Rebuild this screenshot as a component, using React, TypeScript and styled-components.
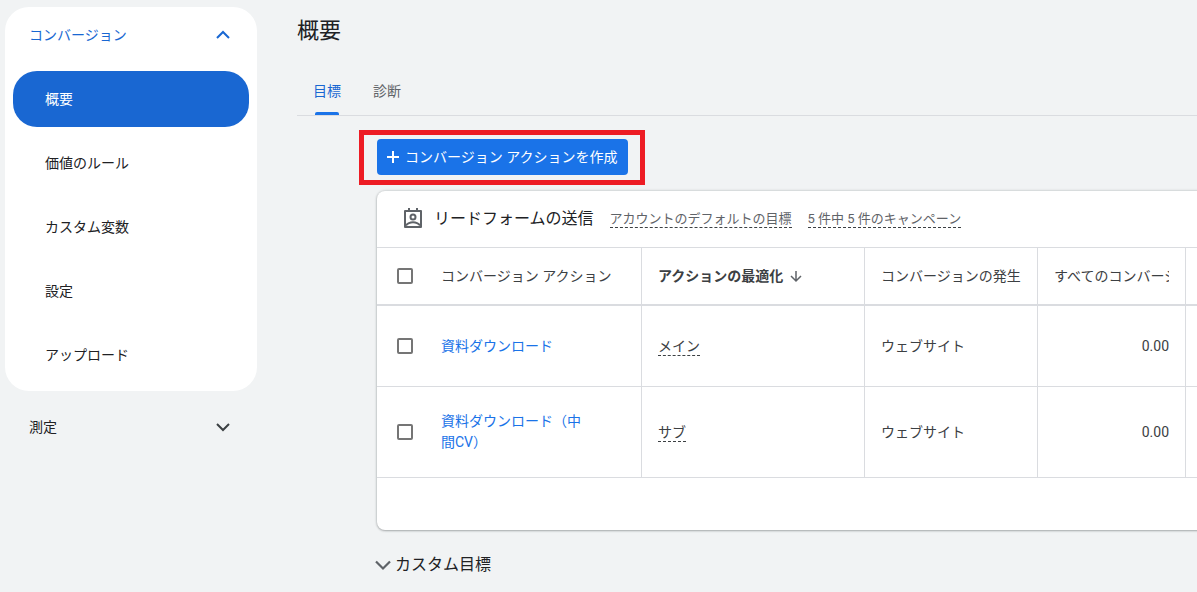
import React from "react";
import styled, { createGlobalStyle } from "styled-components";

const GlobalStyle = createGlobalStyle`
  *, *::before, *::after { box-sizing: border-box; }
  body {
    margin: 0;
    background: #f1f3f4;
    color: #202124;
    font-family: Roboto, "Noto Sans CJK JP", sans-serif;
    font-size: 14px;
    line-height: 20px;
    overflow-x: hidden;
  }
  button, input { font: inherit; margin: 0; }
`;

const Page = styled.div`
  display: flex;
  align-items: flex-start;
  min-height: 100vh;
`;

const Sidebar = styled.nav`
  flex: 0 0 252px;
  margin: 7px 40px 0 5px;
`;

const NavGroup = styled.div`
  display: flex;
  flex-direction: column;
  gap: 8px;
  margin-bottom: 8px;
  padding: 0 8px 8px;
  border-radius: 24px;
  background: #fff;
`;

const NavHeader = styled.button<{ $active?: boolean }>`
  display: flex;
  align-items: center;
  justify-content: space-between;
  width: 100%;
  height: 56px;
  padding: 0 24px;
  border: 0;
  background: none;
  color: ${(p) => (p.$active ? "#1967d2" : "#202124")};
  cursor: pointer;

  ${NavGroup} & { padding: 0 16px; }
`;

const NavItem = styled.a<{ $active?: boolean }>`
  display: flex;
  align-items: center;
  height: 56px;
  padding: 0 32px;
  border-radius: 24px;
  background: ${(p) => (p.$active ? "#1967d2" : "transparent")};
  color: ${(p) => (p.$active ? "#fff" : "#202124")};
  text-decoration: none;
`;

const Main = styled.main`
  flex: 1;
  min-width: 0;
`;

const Title = styled.h1`
  margin: 16px 0 0;
  font-size: 22px;
  line-height: 30px;
  font-weight: 400;
`;

const Tabs = styled.div`
  display: flex;
  margin-top: 22px;
  border-bottom: 1px solid #dadce0;
`;

const Tab = styled.button<{ $active?: boolean }>`
  display: flex;
  flex-direction: column;
  align-items: center;
  height: 47px;
  padding: 13px 16px 0;
  border: 0;
  background: none;
  color: ${(p) => (p.$active ? "#1967d2" : "#5f6368")};
  cursor: pointer;

  &::after {
    content: "";
    width: 24px;
    height: 3px;
    margin-top: auto;
    border-radius: 2px 2px 0 0;
    background: ${(p) => (p.$active ? "#1a73e8" : "transparent")};
  }
`;

const Content = styled.div`
  padding-left: 80px;
`;

const Highlight = styled.div`
  width: fit-content;
  margin: 14px 0 6px -18px;
  padding: 4px 12px 5px 13px;
  border: 5px solid #ed1c24;
`;

const CreateButton = styled.button`
  display: flex;
  align-items: center;
  gap: 4px;
  height: 36px;
  padding: 0 10px 0 8px;
  border: 0;
  border-radius: 4px;
  background: #1a73e8;
  color: #fff;
  white-space: nowrap;
  cursor: pointer;
`;

const Card = styled.section`
  min-width: 828px;
  padding-bottom: 52px;
  border-radius: 8px 0 0 8px;
  background: #fff;
  box-shadow: 0 1px 2px rgba(60, 64, 67, 0.3), 0 0 2px 1px rgba(60, 64, 67, 0.15);
`;

const CardHeader = styled.header`
  display: flex;
  align-items: center;
  gap: 16px;
  height: 57px;
  padding: 0 24px;
  border-bottom: 1px solid #dadce0;
`;

const GoalTitle = styled.h2`
  display: flex;
  align-items: center;
  gap: 9px;
  margin: 0;
  font-size: 16px;
  line-height: 24px;
  font-weight: 400;
  white-space: nowrap;
`;

const Hint = styled.span<{ $small?: boolean }>`
  display: inline-block;
  border-bottom: 1px dashed #3c4043;
  color: ${(p) => (p.$small ? "#5f6368" : "#3c4043")};
  font-size: ${(p) => (p.$small ? 13 : 14)}px;
  line-height: ${(p) => (p.$small ? 16 : 18)}px;
  white-space: nowrap;
`;

const Table = styled.table`
  width: 100%;
  table-layout: fixed;
  border-collapse: separate;
  border-spacing: 0;
  color: #3c4043;
  line-height: 21px;
`;

const Col = styled.col<{ $width?: number }>`
  width: ${(p) => (p.$width ? `${p.$width}px` : "auto")};
`;

const HeadCell = styled.th<{ $divider?: boolean; $sorted?: boolean }>`
  height: 58px;
  padding: 0 16px;
  border-right: ${(p) => (p.$divider ? "1px solid #dadce0" : "0")};
  border-bottom: 2px solid #dadce0;
  text-align: left;
  font-weight: ${(p) => (p.$sorted ? 700 : 400)};
`;

const HeadLabel = styled.div`
  display: flex;
  align-items: center;
  gap: 6px;
  overflow: hidden;
  white-space: nowrap;
`;

const Cell = styled.td<{ $divider?: boolean; $numeric?: boolean }>`
  height: 81px;
  padding: 24px 16px;
  border-right: ${(p) => (p.$divider ? "1px solid #dadce0" : "0")};
  border-bottom: 1px solid #dadce0;
  text-align: ${(p) => (p.$numeric ? "right" : "left")};
`;

const Checkbox = styled.input`
  display: block;
  appearance: none;
  width: 16px;
  height: 16px;
  margin-left: 4px;
  border: 2px solid #757575;
  border-radius: 2px;
  background: #fff;
`;

const ActionLink = styled.a`
  display: block;
  max-width: 144px;
  color: #1a73e8;
  text-decoration: none;
`;

const CustomGoals = styled.button`
  display: flex;
  align-items: center;
  gap: 4px;
  margin: 23px 0 16px -2px;
  padding: 0;
  border: 0;
  background: none;
  color: #202124;
  font-size: 16px;
  line-height: 24px;
  cursor: pointer;
`;

const Chevron = ({ up, color }: { up?: boolean; color: string }) => (
  <svg width="20" height="20" viewBox="0 0 20 20" fill="none" stroke={color} strokeWidth="2" aria-hidden="true">
    <path d={up ? "M4 13l6-6 6 6" : "M4 7l6 6 6-6"} />
  </svg>
);

const navItems = ["概要", "価値のルール", "カスタム変数", "設定", "アップロード"];

const rows = [
  { name: "資料ダウンロード", optimization: "メイン", source: "ウェブサイト", total: "0.00" },
  { name: "資料ダウンロード（中間CV）", optimization: "サブ", source: "ウェブサイト", total: "0.00" },
];

export default function App() {
  return (
    <>
      <GlobalStyle />
      <Page>
        <Sidebar>
          <NavGroup>
            <NavHeader $active aria-expanded="true">
              コンバージョン
              <Chevron up color="#1967d2" />
            </NavHeader>
            {navItems.map((item, i) => (
              <NavItem key={item} href="#" $active={i === 0}>
                {item}
              </NavItem>
            ))}
          </NavGroup>
          <NavHeader aria-expanded="false">
            測定
            <Chevron color="#3c4043" />
          </NavHeader>
        </Sidebar>

        <Main>
          <Title>概要</Title>
          <Tabs role="tablist">
            <Tab role="tab" aria-selected="true" $active>目標</Tab>
            <Tab role="tab" aria-selected="false">診断</Tab>
          </Tabs>
          <Content>
            <Highlight>
              <CreateButton>
                <svg width="16" height="16" viewBox="0 0 16 16" fill="none" stroke="#fff" strokeWidth="2" aria-hidden="true">
                  <path d="M8 2v12M2 8h12" />
                </svg>
                コンバージョン アクションを作成
              </CreateButton>
            </Highlight>

            <Card>
              <CardHeader>
                <GoalTitle>
                  <svg width="24" height="24" viewBox="0 0 24 24" fill="none" stroke="#5f6368" strokeWidth="2" aria-hidden="true">
                    <path d="M4 4h16v16H4zM8 1v3M16 1v3" strokeLinejoin="round" />
                    <circle cx="12" cy="10" r="2.500" />
                    <path d="M5 18.500c2-2.600 4.500-3.200 7-3.200s5 .6 7 3.200" />
                  </svg>
                  リードフォームの送信
                </GoalTitle>
                <Hint $small>アカウントのデフォルトの目標</Hint>
                <Hint $small>5 件中 5 件のキャンペーン</Hint>
              </CardHeader>
              <Table>
                <colgroup>
                  <Col $width={48} />
                  <Col $width={217} />
                  <Col $width={223} />
                  <Col $width={173} />
                  <Col $width={148} />
                  <Col />
                </colgroup>
                <thead>
                  <tr>
                    <HeadCell><Checkbox type="checkbox" aria-label="すべて選択" /></HeadCell>
                    <HeadCell $divider><HeadLabel>コンバージョン アクション</HeadLabel></HeadCell>
                    <HeadCell $divider $sorted aria-sort="descending">
                      <HeadLabel>
                        アクションの最適化
                        <svg width="14" height="14" viewBox="0 0 14 14" fill="none" stroke="#5f6368" strokeWidth="1.500" aria-hidden="true">
                          <path d="M7 2v10M2 7l5 5 5-5" />
                        </svg>
                      </HeadLabel>
                    </HeadCell>
                    <HeadCell $divider><HeadLabel>コンバージョンの発生</HeadLabel></HeadCell>
                    <HeadCell $divider><HeadLabel>すべてのコンバージョン</HeadLabel></HeadCell>
                    <HeadCell />
                  </tr>
                </thead>
                <tbody>
                  {rows.map((row) => (
                    <tr key={row.name}>
                      <Cell><Checkbox type="checkbox" aria-label={row.name} /></Cell>
                      <Cell $divider><ActionLink href="#">{row.name}</ActionLink></Cell>
                      <Cell $divider><Hint>{row.optimization}</Hint></Cell>
                      <Cell $divider>{row.source}</Cell>
                      <Cell $divider $numeric>{row.total}</Cell>
                      <Cell />
                    </tr>
                  ))}
                </tbody>
              </Table>
            </Card>

            <CustomGoals aria-expanded="false">
              <svg width="16" height="16" viewBox="0 0 16 16" fill="none" stroke="#5f6368" strokeWidth="2.200" aria-hidden="true">
                <path d="M1 4.500l7 7 7-7" />
              </svg>
              カスタム目標
            </CustomGoals>
          </Content>
        </Main>
      </Page>
    </>
  );
}
